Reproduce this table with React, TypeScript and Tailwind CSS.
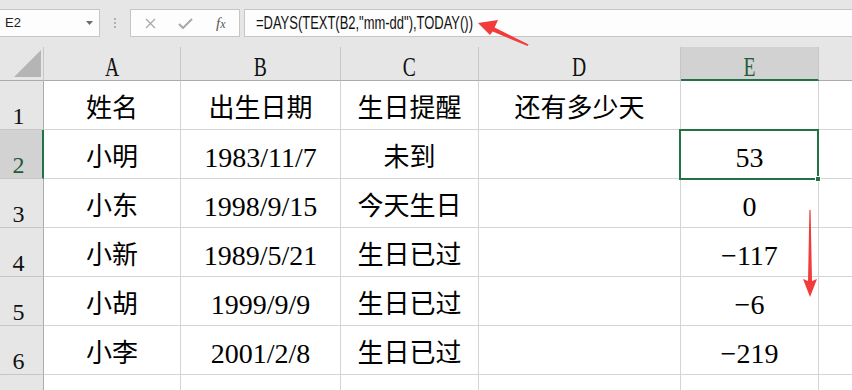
import React from 'react';

// sheet data: name, birthday, reminder, (blank), days left
const ROWS: string[][] = [
  ['姓名', '出生日期', '生日提醒', '还有多少天', ''],
  ['小明', '1983/11/7', '未到', '', '53'],
  ['小东', '1998/9/15', '今天生日', '', '0'],
  ['小新', '1989/5/21', '生日已过', '', '−117'],
  ['小胡', '1999/9/9', '生日已过', '', '−6'],
  ['小李', '2001/2/8', '生日已过', '', '−219'],
  ['', '', '', '', ''],
];

const COLS = ['A', 'B', 'C', 'D', 'E'];
const SELECTED_ROW = 2;
const SELECTED_COL = 'E';

const cellFont = "font-['Liberation_Serif','Noto_Sans_CJK_SC',serif]";

// numbers and dates render a touch larger than the CJK text
const isNumeric = (v: string) => /^[−\d/]+$/.test(v);

function FormulaBar() {
  return (
    <div className="flex h-[47px] items-start bg-[#e6e6e6] pt-[9px]">
      {/* name box */}
      <div className="flex h-[28px] w-[100px] items-center justify-between border border-l-0 border-[#c6c6c6] bg-[#fdfdfd] pl-[5px] pr-[6px]">
        <span className="font-['Liberation_Sans',sans-serif] text-[13px] text-[#222]">E2</span>
        <svg width="7" height="4" viewBox="0 0 7 4">
          <path d="M0 0 L7 0 L3.5 4 Z" fill="#6a6a6a" />
        </svg>
      </div>
      {/* grip dots */}
      <div className="flex h-[28px] w-[30px] flex-col items-center justify-center gap-[2px]">
        <span className="h-[2px] w-[2px] bg-[#b0b0b0]" />
        <span className="h-[2px] w-[2px] bg-[#b0b0b0]" />
        <span className="h-[2px] w-[2px] bg-[#b0b0b0]" />
      </div>
      {/* cancel / enter / fx */}
      <div className="flex h-[28px] w-[110px] items-center border border-[#c6c6c6] bg-[#fdfdfd]">
        <svg className="ml-[14px]" width="11" height="11" viewBox="0 0 11 11">
          <path d="M1 1 L10 10 M10 1 L1 10" stroke="#a8a8a8" strokeWidth="1.3" />
        </svg>
        <svg className="ml-[22px]" width="15" height="11" viewBox="0 0 15 11">
          <path d="M1 6 L5 10 L14 1" stroke="#a8a8a8" strokeWidth="2" fill="none" />
        </svg>
        <span className="ml-[23px] font-['Liberation_Serif',serif] text-[15px] italic leading-none text-[#555]">
          f<span className="text-[12px]">x</span>
        </span>
      </div>
      {/* formula input */}
      <div className="ml-[4px] flex h-[28px] flex-1 items-center border border-r-0 border-[#c6c6c6] bg-[#fdfdfd] pl-[11px]">
        <span className="origin-left scale-x-[0.72] whitespace-nowrap font-['Liberation_Sans',sans-serif] text-[18px] leading-none text-[#111]">
          =DAYS(TEXT(B2,"mm-dd"),TODAY())
        </span>
      </div>
    </div>
  );
}

function Sheet() {
  return (
    <div className="relative grid grid-cols-[44px_137px_160px_138px_202px_138px_1fr] bg-white">
      {/* select-all corner */}
      <div className="flex h-[34px] items-end justify-end border-b border-r border-b-[#ababab] border-r-[#c6c6c6] bg-[#e6e6e6] pb-[3px] pr-[2px]">
        <svg width="27" height="27" viewBox="0 0 27 27">
          <path d="M27 0 L27 27 L0 27 Z" fill="#b5b5b5" />
        </svg>
      </div>
      {COLS.map((c) =>
        c === SELECTED_COL ? (
          <div
            key={c}
            className="flex h-[34px] items-center justify-center border-b-2 border-r border-b-[#217346] border-r-[#c6c6c6] bg-[#d2d2d2] pt-[7px]"
          >
            <span className={`${cellFont} inline-block scale-x-[0.7] text-[28px] leading-none text-[#1e5c3a]`}>{c}</span>
          </div>
        ) : (
          <div
            key={c}
            className="flex h-[34px] items-center justify-center border-b border-r border-b-[#ababab] border-r-[#c6c6c6] bg-[#e6e6e6] pt-[6px]"
          >
            <span className={`${cellFont} inline-block scale-x-[0.7] text-[28px] leading-none text-[#111]`}>{c}</span>
          </div>
        )
      )}
      <div className="h-[34px] border-b border-b-[#ababab] bg-[#e6e6e6]" />

      {ROWS.map((row, i) => {
        const n = i + 1;
        const active = n === SELECTED_ROW;
        return (
          <React.Fragment key={n}>
            <div
              className={
                active
                  ? 'flex h-[49px] items-end justify-center border-b border-r-2 border-b-[#c6c6c6] border-r-[#217346] bg-[#d2d2d2] pb-[1px] pr-[5px]'
                  : 'flex h-[49px] items-end justify-center border-b border-r border-b-[#c6c6c6] border-r-[#ababab] bg-[#e6e6e6] pb-[1px] pr-[6px]'
              }
            >
              <span className={`${cellFont} text-[24px] leading-none ${active ? 'text-[#1e5c3a]' : 'text-[#111]'}`}>{n}</span>
            </div>
            {row.map((v, j) => (
              <div
                key={j}
                className="flex h-[49px] items-center justify-center border-b border-r border-[#d4d4d4] pt-[8px]"
              >
                <span
                  className={`${cellFont} whitespace-nowrap leading-none text-black ${isNumeric(v) ? 'text-[28px]' : 'text-[26px]'}`}
                >
                  {v}
                </span>
              </div>
            ))}
            <div className="h-[49px] border-b border-[#d4d4d4]" />
          </React.Fragment>
        );
      })}

      {/* active cell E2 */}
      <div className="absolute left-[679px] top-[82px] h-[51px] w-[140px] border-2 border-[#217346]">
        <div className="absolute -bottom-[4px] -right-[4px] h-[6px] w-[6px] border border-white bg-[#217346]" />
      </div>
    </div>
  );
}

export default function App() {
  return (
    <div className="relative h-[390px] w-[852px] overflow-hidden bg-white">
      <FormulaBar />
      <Sheet />
      {/* red annotation arrows */}
      <svg className="pointer-events-none absolute left-0 top-0" width="852" height="390" viewBox="0 0 852 390">
        <path
          d="M478 23 L498 20 L494.6 27.6 L528.6 44.4 L527.6 46 L492.6 31.6 L490 35 Z"
          fill="#f23c3c"
        />
        <path d="M809.4 210 L810.6 210 L812 281 L817 279 L810 297 L803 279 L808 281 Z" fill="#f23c3c" />
      </svg>
    </div>
  );
}
